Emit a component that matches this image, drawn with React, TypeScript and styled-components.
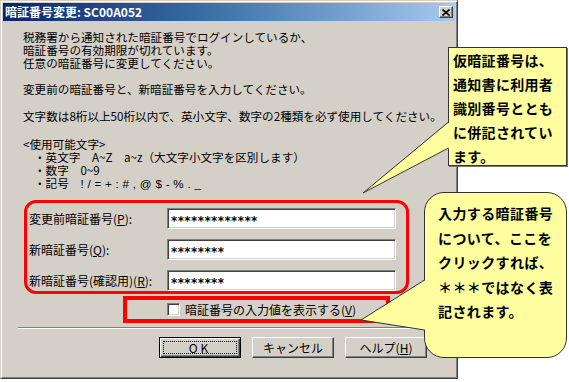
import React from "react";
import styled, { createGlobalStyle } from "styled-components";

// base page setup
const GlobalStyle = createGlobalStyle`
  html, body {
    margin: 0;
    padding: 0;
    background: #fff;
  }
  body {
    font-family: "Noto Sans CJK JP", "Liberation Sans", sans-serif;
    color: #000;
  }
`;

const Page = styled.div`
  position: relative;
  width: 569px;
  height: 382px;
  overflow: hidden;
  background: #fff;
`;

// Win2000 style dialog frame
const Dialog = styled.div`
  width: 458px;
  height: 379px;
  box-sizing: border-box;
  background: #d4d0c8;
  border: 1px solid;
  border-color: #d4d0c8 #404040 #404040 #d4d0c8;
  box-shadow: inset 1px 1px 0 #fff, inset -1px -1px 0 #808080;
  padding: 2px;
  display: flex;
  flex-direction: column;
`;

const TitleBar = styled.div`
  height: 18px;
  flex-shrink: 0;
  display: flex;
  align-items: center;
  justify-content: space-between;
  padding: 0 2px 0 2px;
  background: linear-gradient(90deg, #0a246a 0%, #3a6ea5 45%, #a6caf0 100%);
`;

const TitleText = styled.span`
  color: #fff;
  font-size: 12px;
  font-weight: 700;
  line-height: 18px;
  white-space: nowrap;
`;

const CloseButton = styled.div`
  width: 14px;
  height: 12px;
  box-sizing: border-box;
  background: #d4d0c8;
  border: 1px solid;
  border-color: #fff #404040 #404040 #fff;
  box-shadow: inset -1px -1px 0 #808080;
  display: flex;
  align-items: center;
  justify-content: center;
`;

const Body = styled.div`
  padding: 10px 0 0 20px;
`;

const Para = styled.p<{ $gap: number }>`
  margin: ${(p) => p.$gap}px 0 0 0;
  font-size: 11.6px;
  line-height: 13px;
  white-space: nowrap;
`;

const ListItem = styled.div`
  padding-left: 11px;
  font-size: 11.6px;
  line-height: 13px;
  white-space: nowrap;
`;

const Symbols = styled.span`
  letter-spacing: 3.8px;
  font-family: "Liberation Sans", sans-serif;
`;

// red highlighted group with the three password fields
const FieldGroup = styled.div`
  margin: 10px 0 0 1px;
  width: 385px;
  height: 94px;
  box-sizing: border-box;
  border: 3px solid #ff0000;
  border-radius: 12px;
  padding: 5px 0 0 2px;
  display: grid;
  grid-template-columns: 138px 229px;
  grid-auto-rows: 21px;
  row-gap: 10px;
  align-items: center;
`;

const FieldLabel = styled.span`
  font-size: 12px;
  line-height: 13px;
  white-space: nowrap;
  u {
    text-underline-offset: 1px;
  }
`;

const PasswordBox = styled.div`
  height: 21px;
  box-sizing: border-box;
  background: #fff;
  border: 1px solid;
  border-color: #808080 #fff #fff #808080;
  box-shadow: inset 1px 1px 0 #404040, inset -1px -1px 0 #d4d0c8;
  padding: 0 0 0 3px;
  font-family: "DejaVu Sans", sans-serif;
  font-size: 12px;
  font-weight: 700;
  line-height: 24px;
  letter-spacing: 0.4px;
  overflow: hidden;
`;

const CheckGroup = styled.div`
  margin: 2px 0 0 100px;
  width: 267px;
  height: 27px;
  box-sizing: border-box;
  border: 4px solid #ff0000;
  padding: 0 0 0 40px;
  display: flex;
  align-items: center;
  gap: 5px;
`;

const CheckBox = styled.span`
  width: 13px;
  height: 13px;
  box-sizing: border-box;
  background: #fff;
  border: 1px solid;
  border-color: #808080 #fff #fff #808080;
  box-shadow: inset 1px 1px 0 #404040, inset -1px -1px 0 #d4d0c8;
`;

const CheckLabel = styled.span`
  font-size: 12px;
  line-height: 13px;
  white-space: nowrap;
`;

const Separator = styled.div`
  margin: 4px 15px 0 15px;
  height: 0;
  border-top: 1px solid #808080;
  border-bottom: 1px solid #fff;
`;

const ButtonRow = styled.div`
  margin-top: 8px;
  padding-left: 156px;
  display: flex;
  gap: 11px;
`;

const Button = styled.div<{ $default?: boolean }>`
  position: relative;
  width: 82px;
  height: 21px;
  box-sizing: border-box;
  background: #d4d0c8;
  border: 1px solid;
  border-color: ${(p) => (p.$default ? "#000" : "#fff #404040 #404040 #fff")};
  box-shadow: ${(p) =>
    p.$default
      ? "inset 1px 1px 0 #fff, inset -1px -1px 0 #404040, inset -2px -2px 0 #808080"
      : "inset -1px -1px 0 #808080"};
  display: flex;
  align-items: center;
  justify-content: center;
  font-size: 12px;
  line-height: 13px;
  white-space: nowrap;
  ${(p) =>
    p.$default &&
    `
    letter-spacing: 3px;
    &::after {
      content: "";
      position: absolute;
      inset: 3px;
      border: 1px dotted #000;
    }
  `}
`;

// yellow explanation callouts laid over the dialog
const NoteBox = styled.div`
  position: absolute;
  left: 448px;
  top: 47px;
  width: 119px;
  height: 119px;
  box-sizing: border-box;
  background: #ffffa0;
  border: 1px solid #333;
  box-shadow: 1px 1px 0 #777;
  padding: 0 0 0 4px;
  font-size: 14px;
  font-weight: 700;
  line-height: 24px;
  letter-spacing: 0.3px;
  white-space: nowrap;
`;

const NoteBubble = styled.div`
  position: absolute;
  left: 424px;
  top: 192px;
  width: 143px;
  height: 166px;
  box-sizing: border-box;
  background: #ffffa0;
  border: 1px solid #333;
  border-radius: 20px;
  padding: 8px 0 0 13px;
  font-size: 14px;
  font-weight: 700;
  line-height: 24.5px;
  letter-spacing: 0.4px;
  white-space: nowrap;
`;

const Tails = styled.svg`
  position: absolute;
  left: 0;
  top: 0;
  pointer-events: none;
`;

const App: React.FC = () => {
  return (
    <Page>
      <GlobalStyle />
      <Dialog>
        <TitleBar>
          <TitleText>暗証番号変更: SC00A052</TitleText>
          <CloseButton>
            <svg width="8" height="7" viewBox="0 0 8 7">
              <path d="M0.5 0.5 L7.5 6.5 M7.5 0.5 L0.5 6.5" stroke="#000" strokeWidth="1.6" />
            </svg>
          </CloseButton>
        </TitleBar>

        <Body>
          <Para $gap={0}>
            税務署から通知された暗証番号でログインしているか、
            <br />
            暗証番号の有効期限が切れています。
            <br />
            任意の暗証番号に変更してください。
          </Para>
          <Para $gap={13}>変更前の暗証番号と、新暗証番号を入力してください。</Para>
          <Para $gap={14}>
            文字数は8桁以上50桁以内で、英小文字、数字の2種類を必ず使用してください。
          </Para>
          <Para $gap={15}>{"<使用可能文字>"}</Para>
          <ListItem>・英文字　A~Z　a~z（大文字小文字を区別します）</ListItem>
          <ListItem>・数字　0~9</ListItem>
          <ListItem>
            ・記号　<Symbols>!/=+:#,@$-%._</Symbols>
          </ListItem>

          <FieldGroup>
            <FieldLabel>
              変更前暗証番号(<u>P</u>):
            </FieldLabel>
            <PasswordBox>*************</PasswordBox>
            <FieldLabel>
              新暗証番号(<u>Q</u>):
            </FieldLabel>
            <PasswordBox>********</PasswordBox>
            <FieldLabel>
              新暗証番号(確認用)(<u>R</u>):
            </FieldLabel>
            <PasswordBox>********</PasswordBox>
          </FieldGroup>

          <CheckGroup>
            <CheckBox />
            <CheckLabel>
              暗証番号の入力値を表示する(<u>V</u>)
            </CheckLabel>
          </CheckGroup>
        </Body>

        <Separator />

        <ButtonRow>
          <Button $default>OK</Button>
          <Button>キャンセル</Button>
          <Button>
            ヘルプ(<u>H</u>)
          </Button>
        </ButtonRow>
      </Dialog>

      <NoteBox>
        仮暗証番号は、
        <br />
        通知書に利用者
        <br />
        識別番号ととも
        <br />
        に併記されてい
        <br />
        ます。
      </NoteBox>

      <NoteBubble>
        入力する暗証番号
        <br />
        について、ここを
        <br />
        クリックすれば、
        <br />
        ＊＊＊ではなく表
        <br />
        記されます。
      </NoteBubble>

      <Tails width="569" height="382" viewBox="0 0 569 382">
        <polygon points="449.5,122 363,193 449.5,148" fill="#ffffa0" />
        <polyline points="448.5,122 363,193 448.5,148" fill="none" stroke="#333" strokeWidth="1" />
        <polygon points="425.5,280 361,320 425.5,330" fill="#ffffa0" />
        <polyline points="424.5,280 361,320 424.5,330" fill="none" stroke="#333" strokeWidth="1" />
      </Tails>
    </Page>
  );
};

export default App;
